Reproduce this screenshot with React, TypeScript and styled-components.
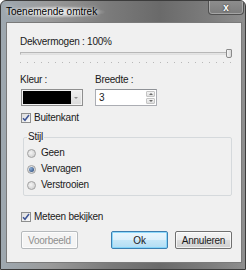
import React from "react";
import styled, { createGlobalStyle } from "styled-components";

const Global = createGlobalStyle`
  html, body { margin: 0; padding: 0; background: #ffffff; }
  body { font-family: "Liberation Sans", Arial, sans-serif; }
`;

const Window = styled.div`
  width: 246px;
  height: 270px;
  box-sizing: border-box;
  display: flex;
  flex-direction: column;
  border: 1px solid #3c3c3c;
  border-radius: 6px 6px 0 0;
  background: linear-gradient(to right, #9ea8b0 0%, #9a9a9a 20%, #7a7a7a 45%, #6a6a6a 65%, #7c7c7c 85%, #8e8e8e 100%);
  overflow: hidden;
`;

const TitleBar = styled.div`
  height: 21px;
  display: flex;
  align-items: flex-start;
  padding-left: 5px;
  flex-shrink: 0;
`;

const Title = styled.div`
  margin-top: 5px;
  font-size: 10px;
  line-height: 12px;
  color: #000;
  padding: 0 8px 0 0;
  background: radial-gradient(ellipse at center, rgba(235,235,235,0.85) 30%, rgba(220,220,220,0) 72%);
  text-shadow: 0 0 4px rgba(255,255,255,0.9);
`;

const CloseButton = styled.div`
  margin-left: auto;
  margin-right: 1px;
  margin-top: -1px;
  width: 36px;
  height: 15px;
  box-sizing: border-box;
  border: 1px solid #505050;
  border-top: none;
  border-radius: 0 0 4px 4px;
  background: linear-gradient(#8e8e8e, #7c7c7c);
  box-shadow: inset 0 0 0 1px rgba(255,255,255,0.3);
  display: flex;
  align-items: center;
  justify-content: center;
  color: #fff;
  font-size: 10px;
  font-weight: bold;
  text-shadow: 0 0 2px #222;
`;

const Body = styled.div`
  flex: 1;
  margin: 0 3px 6px 5px;
  box-sizing: border-box;
  border: 1px solid #7a7a7a;
  background: #f0f0f0;
  padding: 13px 9px 0 13px;
  display: flex;
  flex-direction: column;
  color: #1a1a1a;
  font-size: 10px;
  letter-spacing: -0.25px;
`;

const Label = styled.div`
  font-size: 10px;
  line-height: 12px;
  height: 12px;
`;

const Slider = styled.div`
  position: relative;
  height: 10px;
  width: 211px;
`;

const Track = styled.div`
  margin-top: 4px;
  height: 3px;
  width: 208px;
  box-sizing: border-box;
  border: 1px solid #b7b7b7;
  border-bottom-color: #e0e0e0;
  background: #e4e4e4;
`;

const Thumb = styled.div`
  position: absolute;
  left: 206px;
  top: 1px;
  width: 6px;
  height: 9px;
  box-sizing: border-box;
  border: 1px solid #8a8a8a;
  border-radius: 1px 1px 2px 2px;
  background: linear-gradient(to right, #f6f6f6, #d8d8d8);
`;

const Ticks = styled.div`
  margin-top: 4px;
  height: 1px;
  width: 211px;
  background: repeating-linear-gradient(to right, #b8b8b8 0 1px, transparent 1px 7px);
`;

const Fields = styled.div`
  margin-top: 11px;
  margin-left: 1px;
  display: grid;
  grid-template-columns: 75px 62px;
`;

const Field = styled.div`
  display: flex;
  flex-direction: column;
`;

const FieldLabel = styled(Label)`
  margin-left: -1px;
`;

const Combo = styled.div`
  margin-top: 3px;
  width: 62px;
  height: 17px;
  box-sizing: border-box;
  border: 1px solid #8f8f8f;
  background: #f2f2f2;
  display: flex;
  padding: 1px;
`;

const Swatch = styled.div<{ $color: string }>`
  flex: 1;
  background: ${(p) => p.$color};
`;

const DropButton = styled.div`
  width: 10px;
  display: flex;
  align-items: center;
  justify-content: center;
  background: linear-gradient(#eeeeee, #dcdcdc);
  &::after {
    content: "";
    border-left: 2px solid transparent;
    border-right: 2px solid transparent;
    border-top: 2px solid #8a8a8a;
  }
`;

const Spin = styled.div`
  margin-top: 3px;
  margin-left: -1px;
  width: 62px;
  height: 17px;
  box-sizing: border-box;
  border: 1px solid #abadb3;
  border-top-color: #8e9196;
  background: #fff;
  display: flex;
`;

const SpinValue = styled.div`
  flex: 1;
  padding-left: 3px;
  font-size: 10px;
  line-height: 15px;
`;

const SpinButtons = styled.div`
  width: 9px;
  display: flex;
  flex-direction: column;
  gap: 1px;
  padding: 1px 1px 1px 0;
`;

const SpinHalf = styled.div<{ $up?: boolean }>`
  flex: 1;
  border: 1px solid #c4c4c4;
  border-radius: 1px;
  background: linear-gradient(#f4f4f4, #dedede);
  display: flex;
  align-items: center;
  justify-content: center;
  &::after {
    content: "";
    border-left: 2px solid transparent;
    border-right: 2px solid transparent;
    ${(p) => (p.$up ? "border-bottom: 2px solid #6a6a6a;" : "border-top: 2px solid #6a6a6a;")}
  }
`;

const CheckRow = styled.div<{ $mt: number }>`
  margin-top: ${(p) => p.$mt}px;
  margin-left: 1px;
  height: 12px;
  display: flex;
  align-items: center;
  gap: 3px;
  font-size: 10px;
  line-height: 12px;
`;

const CheckBox = styled.div`
  width: 10px;
  height: 10px;
  box-sizing: border-box;
  border: 1px solid #8e8f8f;
  background: linear-gradient(135deg, #dcdcdc, #fbfbfb);
  display: flex;
  align-items: center;
  justify-content: center;
`;

const Group = styled.fieldset`
  margin: 7px 0 0 3px;
  padding: 2px 2px 2px 3px;
  border: 1px solid #d5d9dc;
  border-radius: 2px;
  min-width: 0;
`;

const Legend = styled.legend`
  padding: 0 1px;
  font-size: 10px;
  line-height: 12px;
  color: #1a1a1a;
`;

const RadioRow = styled.div`
  height: 16px;
  display: flex;
  align-items: center;
  gap: 5px;
  font-size: 10px;
  line-height: 12px;
`;

const Radio = styled.div<{ $on?: boolean }>`
  width: 9px;
  height: 9px;
  box-sizing: border-box;
  border-radius: 50%;
  border: 1px solid #a2a2a2;
  background: radial-gradient(circle at 40% 40%, #f4f4f4, #c8c8c8);
  display: flex;
  align-items: center;
  justify-content: center;
  &::after {
    content: "";
    display: ${(p) => (p.$on ? "block" : "none")};
    width: 5px;
    height: 5px;
    border-radius: 50%;
    background: radial-gradient(circle at 35% 35%, #8fb0d8, #1f3f70);
  }
`;

const Buttons = styled.div`
  margin-top: 8px;
  margin-left: 1px;
  display: flex;
  justify-content: space-between;
`;

const ButtonGroup = styled.div`
  display: flex;
  gap: 7px;
`;

const Button = styled.div<{ $kind?: "default" | "disabled" }>`
  width: 57px;
  height: 18px;
  box-sizing: border-box;
  border-radius: 2px;
  display: flex;
  align-items: center;
  justify-content: center;
  font-size: 10px;
  border: 1px solid
    ${(p) => (p.$kind === "default" ? "#3c7fb1" : p.$kind === "disabled" ? "#b5b9bc" : "#707070")};
  color: ${(p) => (p.$kind === "disabled" ? "#8f8f8f" : "#1a1a1a")};
  background: ${(p) =>
    p.$kind === "default"
      ? "linear-gradient(#eaf6fd 0%, #dcf0fb 50%, #c6e7f8 51%, #b2ddf4 100%)"
      : p.$kind === "disabled"
      ? "#f4f4f4"
      : "linear-gradient(#f4f4f4 0%, #ebebeb 50%, #dddddd 51%, #cfcfcf 100%)"};
  box-shadow: inset 0 0 0 1px
    ${(p) => (p.$kind === "default" ? "rgba(120,210,250,0.8)" : "rgba(255,255,255,0.7)")};
`;

const Check = () => (
  <svg width="8" height="8" viewBox="0 0 8 8">
    <path d="M1 4.2 L3 6.3 L7 1" fill="none" stroke="#3d5495" strokeWidth="1.5" />
  </svg>
);

export default function App() {
  return (
    <>
      <Global />
      <Window>
        <TitleBar>
          <Title>Toenemende omtrek</Title>
          <CloseButton>x</CloseButton>
        </TitleBar>
        <Body>
          <Label>Dekvermogen : 100%</Label>
          <Slider>
            <Track />
            <Thumb />
          </Slider>
          <Ticks />
          <Fields>
            <Field>
              <FieldLabel>Kleur :</FieldLabel>
              <Combo>
                <Swatch $color="#000000" />
                <DropButton />
              </Combo>
            </Field>
            <Field>
              <FieldLabel>Breedte :</FieldLabel>
              <Spin>
                <SpinValue>3</SpinValue>
                <SpinButtons>
                  <SpinHalf $up />
                  <SpinHalf />
                </SpinButtons>
              </Spin>
            </Field>
          </Fields>
          <CheckRow $mt={6}>
            <CheckBox>
              <Check />
            </CheckBox>
            Buitenkant
          </CheckRow>
          <Group>
            <Legend>Stijl</Legend>
            <RadioRow>
              <Radio />
              Geen
            </RadioRow>
            <RadioRow>
              <Radio $on />
              Vervagen
            </RadioRow>
            <RadioRow>
              <Radio />
              Verstrooien
            </RadioRow>
          </Group>
          <CheckRow $mt={15}>
            <CheckBox>
              <Check />
            </CheckBox>
            Meteen bekijken
          </CheckRow>
          <Buttons>
            <Button $kind="disabled">Voorbeeld</Button>
            <ButtonGroup>
              <Button $kind="default">Ok</Button>
              <Button>Annuleren</Button>
            </ButtonGroup>
          </Buttons>
        </Body>
      </Window>
    </>
  );
}
